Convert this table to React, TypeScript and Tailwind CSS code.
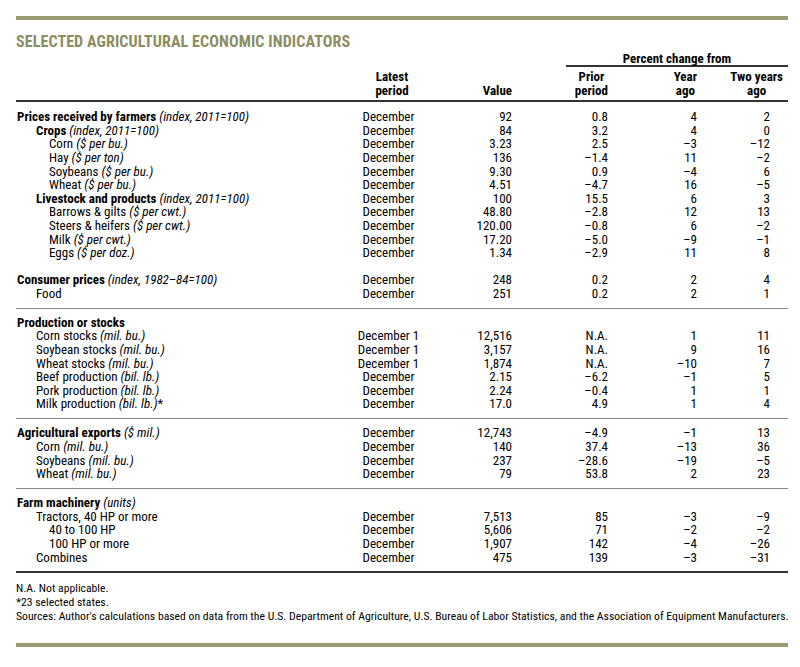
import React from "react";

type Row = {
  label: string;
  unit?: string;
  level: 0 | 1 | 2;
  bold?: boolean;
  star?: boolean;
  period?: string;
  value?: string;
  prior?: string;
  year?: string;
  two?: string;
};

const D = "December";
const D1 = "December 1";
const M = "\u2013";

const sections: Row[][] = [
  [
    { label: "Prices received by farmers", unit: "(index, 2011=100)", level: 0, bold: true, period: D, value: "92", prior: "0.8", year: "4", two: "2" },
    { label: "Crops", unit: "(index, 2011=100)", level: 1, bold: true, period: D, value: "84", prior: "3.2", year: "4", two: "0" },
    { label: "Corn", unit: "($ per bu.)", level: 2, period: D, value: "3.23", prior: "2.5", year: M + "3", two: M + "12" },
    { label: "Hay", unit: "($ per ton)", level: 2, period: D, value: "136", prior: M + "1.4", year: "11", two: M + "2" },
    { label: "Soybeans", unit: "($ per bu.)", level: 2, period: D, value: "9.30", prior: "0.9", year: M + "4", two: "6" },
    { label: "Wheat", unit: "($ per bu.)", level: 2, period: D, value: "4.51", prior: M + "4.7", year: "16", two: M + "5" },
    { label: "Livestock and products", unit: "(index, 2011=100)", level: 1, bold: true, period: D, value: "100", prior: "15.5", year: "6", two: "3" },
    { label: "Barrows & gilts", unit: "($ per cwt.)", level: 2, period: D, value: "48.80", prior: M + "2.8", year: "12", two: "13" },
    { label: "Steers & heifers", unit: "($ per cwt.)", level: 2, period: D, value: "120.00", prior: M + "0.8", year: "6", two: M + "2" },
    { label: "Milk", unit: "($ per cwt.)", level: 2, period: D, value: "17.20", prior: M + "5.0", year: M + "9", two: M + "1" },
    { label: "Eggs", unit: "($ per doz.)", level: 2, period: D, value: "1.34", prior: M + "2.9", year: "11", two: "8" },
    { label: "", level: 0 },
    { label: "Consumer prices", unit: "(index, 1982\u201384=100)", level: 0, bold: true, period: D, value: "248", prior: "0.2", year: "2", two: "4" },
    { label: "Food", level: 1, period: D, value: "251", prior: "0.2", year: "2", two: "1" },
  ],
  [
    { label: "Production or stocks", level: 0, bold: true },
    { label: "Corn stocks", unit: "(mil. bu.)", level: 1, period: D1, value: "12,516", prior: "N.A.", year: "1", two: "11" },
    { label: "Soybean stocks", unit: "(mil. bu.)", level: 1, period: D1, value: "3,157", prior: "N.A.", year: "9", two: "16" },
    { label: "Wheat stocks", unit: "(mil. bu.)", level: 1, period: D1, value: "1,874", prior: "N.A.", year: M + "10", two: "7" },
    { label: "Beef production", unit: "(bil. lb.)", level: 1, period: D, value: "2.15", prior: M + "6.2", year: M + "1", two: "5" },
    { label: "Pork production", unit: "(bil. lb.)", level: 1, period: D, value: "2.24", prior: M + "0.4", year: "1", two: "1" },
    { label: "Milk production", unit: "(bil. lb.)", star: true, level: 1, period: D, value: "17.0", prior: "4.9", year: "1", two: "4" },
  ],
  [
    { label: "Agricultural exports", unit: "($ mil.)", level: 0, bold: true, period: D, value: "12,743", prior: M + "4.9", year: M + "1", two: "13" },
    { label: "Corn", unit: "(mil. bu.)", level: 1, period: D, value: "140", prior: "37.4", year: M + "13", two: "36" },
    { label: "Soybeans", unit: "(mil. bu.)", level: 1, period: D, value: "237", prior: M + "28.6", year: M + "19", two: M + "5" },
    { label: "Wheat", unit: "(mil. bu.)", level: 1, period: D, value: "79", prior: "53.8", year: "2", two: "23" },
  ],
  [
    { label: "Farm machinery", unit: "(units)", level: 0, bold: true },
    { label: "Tractors, 40 HP or more", level: 1, period: D, value: "7,513", prior: "85", year: M + "3", two: M + "9" },
    { label: "40 to 100 HP", level: 2, period: D, value: "5,606", prior: "71", year: M + "2", two: M + "2" },
    { label: "100 HP or more", level: 2, period: D, value: "1,907", prior: "142", year: M + "4", two: M + "26" },
    { label: "Combines", level: 1, period: D, value: "475", prior: "139", year: M + "3", two: M + "31" },
  ],
];

const grid = "grid grid-cols-[341px_63px_92px_96px_89px_73px_18px]";

function DataRow({ r }: { r: Row }) {
  const indent = r.level === 0 ? "pl-[1px]" : r.level === 1 ? "pl-[20px]" : "pl-[33px]";
  return (
    <div className={`${grid} h-[13.6px] leading-[13.6px] text-[13px] text-black`}>
      <div className={`${indent} whitespace-nowrap`}>
        <span className={r.bold ? "font-bold" : ""}>{r.label}</span>
        {r.unit ? <span className="italic"> {r.unit}</span> : null}
        {r.star ? <span>*</span> : null}
      </div>
      <div className="text-center whitespace-nowrap">{r.period ?? ""}</div>
      <div className="text-right">{r.value ?? ""}</div>
      <div className="text-right">{r.prior ?? ""}</div>
      <div className="text-right">{r.year ?? ""}</div>
      <div className="text-right">{r.two ?? ""}</div>
      <div />
    </div>
  );
}

export default function App() {
  return (
    <div className="w-[800px] h-[667px] bg-white px-[16px] pt-[16px] font-['Roboto_Condensed',Roboto,sans-serif] font-stretch-condensed">
      <div className="w-[772px]">
        <div className="h-[4px] bg-[#999a72]" />
        <div className="mt-[13px] text-[16px] leading-[18px] font-bold text-[#8d8d62] tracking-[0.1px]">
          SELECTED AGRICULTURAL ECONOMIC INDICATORS
        </div>
        <div className={`${grid} mt-[1px] text-[13px] font-bold leading-[13.6px]`}>
          <div className="col-start-4 col-span-4 ml-[54px] border-b-[2px] border-[#333] pb-[3px] text-center h-[15px]">
            Percent change from
          </div>
        </div>
        <div className={`${grid} mt-[3px] text-[13px] font-bold leading-[13.6px] items-end pb-[3px] border-b-[2px] border-[#333]`}>
          <div />
          <div className="text-center pl-[7px]">Latest<br />period</div>
          <div className="text-right">Value</div>
          <div className="flex justify-end"><div className="text-center">Prior<br />period</div></div>
          <div className="flex justify-end"><div className="text-center">Year<br />ago</div></div>
          <div className="col-span-2 flex justify-end pr-[5px]"><div className="text-center">Two years<br />ago</div></div>
        </div>
        <div className="pt-[8px]">
          {sections.map((sec, si) => (
            <div key={si}>
              {si > 0 ? (
                <div className="h-[15.4px] flex items-center">
                  <div className="w-full h-[1px] bg-[#8a8a8a]" />
                </div>
              ) : null}
              {sec.map((r, i) => (
                <DataRow key={i} r={r} />
              ))}
            </div>
          ))}
        </div>
        <div className="mt-[7px] border-t-[2px] border-[#333] pt-[8px] text-[11.7px] leading-[14px] text-black">
          <div>N.A. Not applicable.</div>
          <div>*23 selected states.</div>
          <div className="whitespace-nowrap">
            Sources: Author's calculations based on data from the U.S. Department of Agriculture, U.S. Bureau of Labor Statistics, and the Association of Equipment Manufacturers.
          </div>
        </div>
        <div className="mt-[20px] h-[4px] bg-[#999a72]" />
      </div>
    </div>
  );
}
